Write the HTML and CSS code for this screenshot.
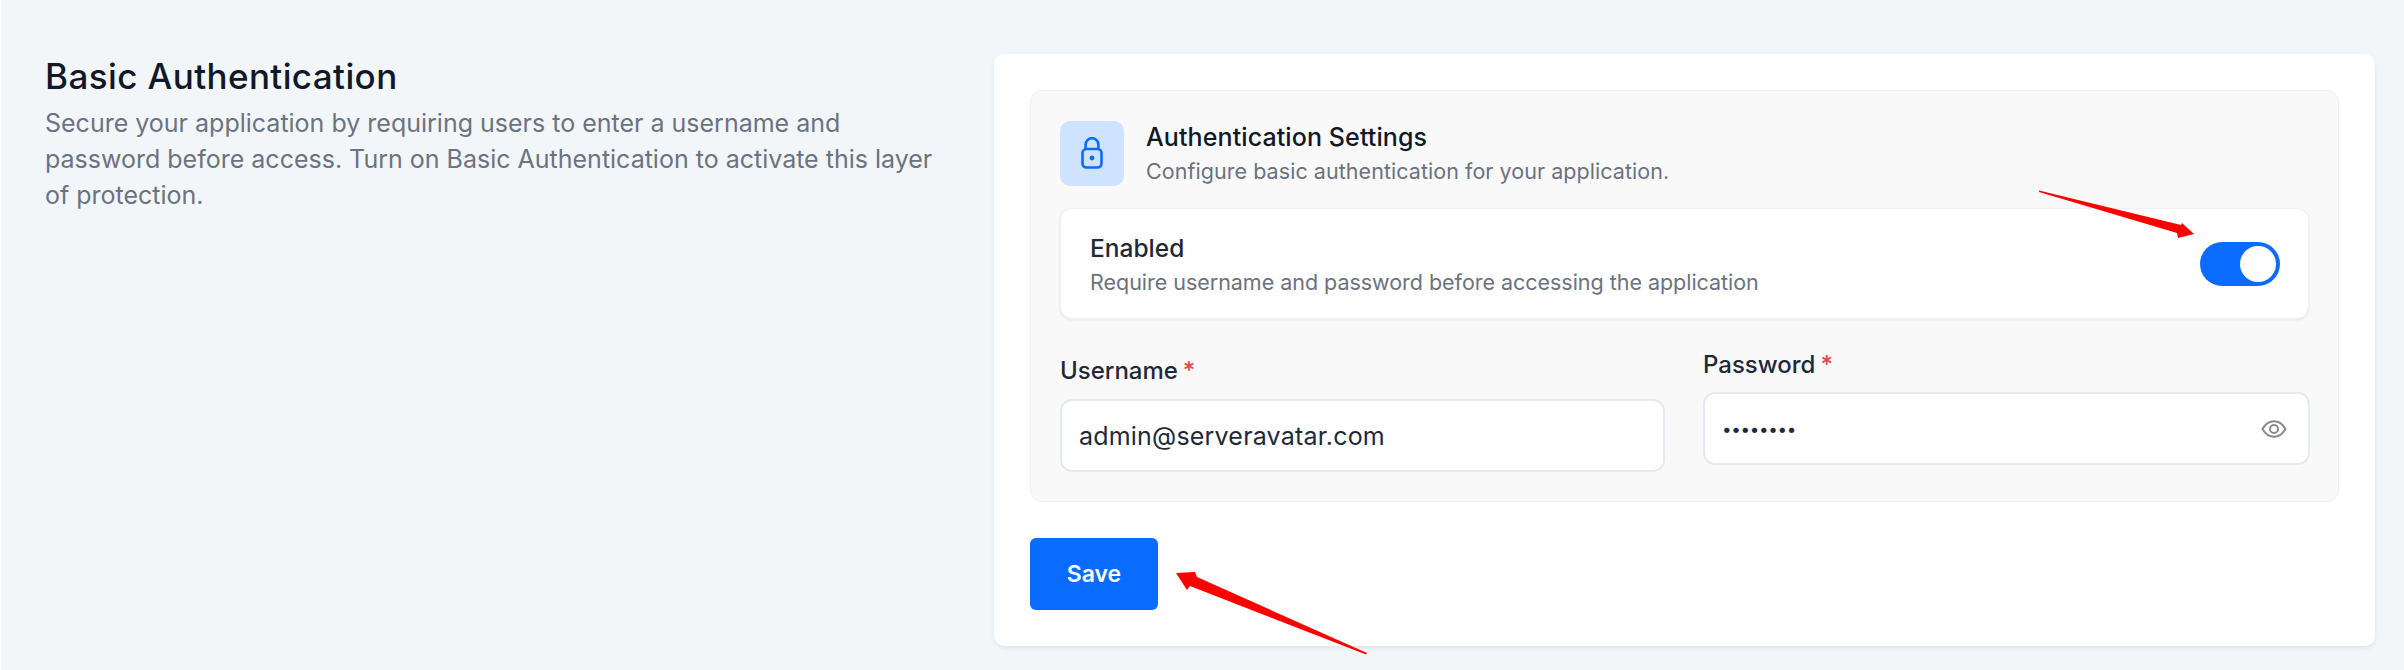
FILE: index.html
```html
<!DOCTYPE html>
<html lang="en">
<head>
    <meta charset="UTF-8">
    <meta name="viewport" content="width=device-width, initial-scale=1.0">
    <title>Basic Authentication</title>
    <link rel="stylesheet" href="styles.css">
</head>
<body>
    <div class="page">
        <div class="intro">
            <h1>Basic Authentication</h1>
            <p>Secure your application by requiring users to enter a username and password before access. Turn on Basic Authentication to activate this layer of protection.</p>
        </div>

        <div class="card">
            <div class="panel">
                <div class="panel-head">
                    <div class="lock-box">
                        <svg width="22" height="32" viewBox="0 0 22 32" fill="none" stroke="#0a6cff" stroke-width="2.6">
                            <rect x="1.5" y="12" width="19" height="18.5" rx="4"/>
                            <path d="M4.600 12V7.600a6.400 6.400 0 0 1 12.800 0V12"/>
                            <circle cx="11" cy="21" r="2.400" fill="#0a6cff" stroke="none"/>
                        </svg>
                    </div>
                    <div>
                        <h2>Authentication Settings</h2>
                        <p class="muted">Configure basic authentication for your application.</p>
                    </div>
                </div>

                <div class="toggle-row">
                    <div>
                        <h3>Enabled</h3>
                        <p class="muted">Require username and password before accessing the application</p>
                    </div>
                    <div class="toggle"><span class="knob"></span></div>
                </div>

                <div class="fields">
                    <div class="field field-username">
                        <label for="username">Username<span class="req">*</span></label>
                        <div class="input-box">
                            <input id="username" type="text" value="admin@serveravatar.com">
                        </div>
                    </div>
                    <div class="field">
                        <label for="password">Password<span class="req">*</span></label>
                        <div class="input-box">
                            <input id="password" class="secret" type="password" value="password">
                            <svg width="26" height="18" viewBox="0 0 26 18" fill="none" stroke="#8a8a8a" stroke-width="2">
                                <path d="M1.500 9C4.500 3.800 8.400 1.300 13 1.300S21.500 3.800 24.500 9C21.500 14.200 17.600 16.700 13 16.700S4.500 14.200 1.500 9Z"/>
                                <circle cx="13" cy="9" r="4"/>
                            </svg>
                        </div>
                    </div>
                </div>
            </div>

            <button class="save">Save</button>
        </div>

        <!-- red annotation arrows drawn over the screenshot -->
        <svg class="arrows" width="2404" height="670" viewBox="0 0 2404 670">
            <polygon fill="#ff0000" points="2038,190.500 2180,225 2181,223 2193,234 2177,238 2176,233 2038,192"/>
            <polygon fill="#ff0000" points="1366,653 1196,577 1194,572 1175,573 1186,590 1189,586 1365,654.500"/>
        </svg>
    </div>
</body>
</html>
```

FILE: styles.css
```css
* {
    box-sizing: border-box;
}

body {
    margin: 0;
    font-family: Inter, "Noto Sans", sans-serif;
    background-color: #f3f6f9;
    color: #111827;
}

h1, h2, h3, p {
    margin: 0;
}

.page {
    position: relative;
    display: flex;
    justify-content: space-between;
    align-items: flex-start;
    height: 670px;
    padding: 54px 29px 0 44px;
    border-left: 1px solid white;
    overflow: hidden;
}

.intro {
    width: 905px;
}

.intro h1 {
    font-size: 35px;
    line-height: 44px;
    font-weight: 500;
    letter-spacing: 0.4px;
    margin-bottom: 7px;
}

.intro p {
    font-size: 25px;
    line-height: 36px;
    color: #6b7280;
}

.card {
    width: 1381px;
    height: 592px;
    padding: 36px;
    background-color: white;
    border-radius: 10px;
    box-shadow: 0 2px 4px rgba(0,0,0,0.08);
}

.panel {
    height: 412px;
    padding: 29px 29px 0 29px;
    background-color: #f9f9fa;
    border: 1px solid #eff0f2;
    border-radius: 12px;
}

.panel-head {
    display: flex;
    align-items: center;
    gap: 22px;
    margin-bottom: 22px;
}

.lock-box {
    display: flex;
    align-items: center;
    justify-content: center;
    width: 64px;
    height: 65px;
    background-color: #cfe2ff;
    border-radius: 10px;
}

.panel-head h2 {
    font-size: 25px;
    line-height: 34px;
    font-weight: 500;
    letter-spacing: 0.1px;
    margin-bottom: 2px;
}

.muted {
    font-size: 21.5px;
    line-height: 30px;
    color: #6b7280;
    letter-spacing: 0.05px;
}

.toggle-row {
    display: flex;
    align-items: center;
    justify-content: space-between;
    height: 111px;
    padding: 0 28px 0 29px;
    background-color: white;
    border: 1px solid #f0f1f3;
    border-radius: 12px;
    box-shadow: 0 1px 3px rgba(0,0,0,0.08);
}

.toggle-row h3 {
    font-size: 24.5px;
    line-height: 34px;
    font-weight: 500;
    color: #1f2937;
    margin-bottom: 2px;
}

.toggle-row .muted {
    letter-spacing: -0.03px;
}

.toggle {
    display: flex;
    align-items: center;
    justify-content: flex-end;
    width: 80px;
    height: 44px;
    padding-right: 4px;
    background-color: #0a6cff;
    border-radius: 22px;
}

.knob {
    width: 36px;
    height: 36px;
    background-color: white;
    border-radius: 50%;
}

.fields {
    display: grid;
    grid-template-columns: 605px 607px;
    gap: 38px;
    margin-top: 30px;
}

.field-username {
    margin-top: 6px;
}

.field label {
    display: block;
    font-size: 24px;
    line-height: 32px;
    font-weight: 500;
    color: #1f2937;
    margin-bottom: 11px;
}

.field-username label {
    margin-bottom: 12px;
}

.req {
    color: #ef4444;
    margin-left: 5px;
}

.input-box {
    display: flex;
    align-items: center;
    height: 73px;
    padding: 0 21px 0 17px;
    background-color: white;
    border: 2px solid #e5e9f0;
    border-radius: 12px;
}

.input-box input {
    flex: 1;
    min-width: 0;
    padding: 0;
    border: none;
    outline: none;
    background: none;
    font-family: inherit;
    font-size: 25px;
    letter-spacing: 0.2px;
    color: #1f2937;
}

.input-box .secret {
    font-size: 17px;
    letter-spacing: -0.3px;
}

.save {
    display: block;
    width: 128px;
    height: 72px;
    margin-top: 36px;
    padding: 0;
    border: none;
    border-radius: 6px;
    background-color: #0a6cff;
    color: white;
    font-family: inherit;
    font-size: 23px;
    font-weight: 600;
    cursor: pointer;
}

.arrows {
    position: absolute;
    top: 0;
    left: 0;
    pointer-events: none;
}
```
